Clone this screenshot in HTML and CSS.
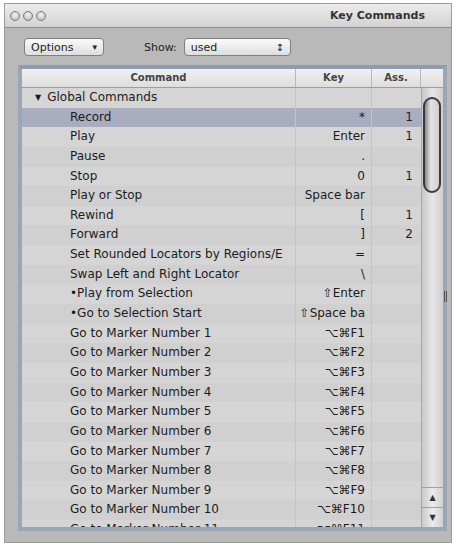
FILE: index.html
```html
<!DOCTYPE html>
<html lang="en">
<head>
  <meta charset="UTF-8" />
  <title>Key Commands</title>
  <link rel="stylesheet" href="styles.css">
</head>
<body>
  <div class="window">
    <div class="titlebar">
      <div class="lights">
        <span class="light"></span><span class="light"></span><span class="light"></span>
      </div>
      <div class="title">Key Commands</div>
    </div>

    <div class="toolbar">
      <div class="popup options">Options <span class="arrow">&#9662;</span></div>
      <span class="show-label">Show:</span>
      <div class="popup show">used <span class="updown">&#8597;</span></div>
    </div>

    <div class="frame">
      <div class="header">
        <div class="hcell col-cmd">Command</div>
        <div class="hcell col-key">Key</div>
        <div class="hcell col-ass">Ass.</div>
        <div class="hcell col-sb"></div>
      </div>
      <div class="content">
        <div class="rows">
          <div class="row group"><div class="cell col-cmd"><span class="tri">&#9660;</span>Global Commands</div><div class="cell col-key"></div><div class="cell col-ass"></div></div>
          <div class="row selected"><div class="cell col-cmd">Record</div><div class="cell col-key">*</div><div class="cell col-ass">1</div></div>
          <div class="row"><div class="cell col-cmd">Play</div><div class="cell col-key">Enter</div><div class="cell col-ass">1</div></div>
          <div class="row"><div class="cell col-cmd">Pause</div><div class="cell col-key">.</div><div class="cell col-ass"></div></div>
          <div class="row"><div class="cell col-cmd">Stop</div><div class="cell col-key">0</div><div class="cell col-ass">1</div></div>
          <div class="row"><div class="cell col-cmd">Play or Stop</div><div class="cell col-key">Space bar</div><div class="cell col-ass"></div></div>
          <div class="row"><div class="cell col-cmd">Rewind</div><div class="cell col-key">[</div><div class="cell col-ass">1</div></div>
          <div class="row"><div class="cell col-cmd">Forward</div><div class="cell col-key">]</div><div class="cell col-ass">2</div></div>
          <div class="row"><div class="cell col-cmd">Set Rounded Locators by Regions/E</div><div class="cell col-key">=</div><div class="cell col-ass"></div></div>
          <div class="row"><div class="cell col-cmd">Swap Left and Right Locator</div><div class="cell col-key">\</div><div class="cell col-ass"></div></div>
          <div class="row"><div class="cell col-cmd">&bull;Play from Selection</div><div class="cell col-key">&#8679;Enter</div><div class="cell col-ass"></div></div>
          <div class="row"><div class="cell col-cmd">&bull;Go to Selection Start</div><div class="cell col-key">&#8679;Space ba</div><div class="cell col-ass"></div></div>
          <div class="row"><div class="cell col-cmd">Go to Marker Number 1</div><div class="cell col-key">&#8997;&#8984;F1</div><div class="cell col-ass"></div></div>
          <div class="row"><div class="cell col-cmd">Go to Marker Number 2</div><div class="cell col-key">&#8997;&#8984;F2</div><div class="cell col-ass"></div></div>
          <div class="row"><div class="cell col-cmd">Go to Marker Number 3</div><div class="cell col-key">&#8997;&#8984;F3</div><div class="cell col-ass"></div></div>
          <div class="row"><div class="cell col-cmd">Go to Marker Number 4</div><div class="cell col-key">&#8997;&#8984;F4</div><div class="cell col-ass"></div></div>
          <div class="row"><div class="cell col-cmd">Go to Marker Number 5</div><div class="cell col-key">&#8997;&#8984;F5</div><div class="cell col-ass"></div></div>
          <div class="row"><div class="cell col-cmd">Go to Marker Number 6</div><div class="cell col-key">&#8997;&#8984;F6</div><div class="cell col-ass"></div></div>
          <div class="row"><div class="cell col-cmd">Go to Marker Number 7</div><div class="cell col-key">&#8997;&#8984;F7</div><div class="cell col-ass"></div></div>
          <div class="row"><div class="cell col-cmd">Go to Marker Number 8</div><div class="cell col-key">&#8997;&#8984;F8</div><div class="cell col-ass"></div></div>
          <div class="row"><div class="cell col-cmd">Go to Marker Number 9</div><div class="cell col-key">&#8997;&#8984;F9</div><div class="cell col-ass"></div></div>
          <div class="row"><div class="cell col-cmd">Go to Marker Number 10</div><div class="cell col-key">&#8997;&#8984;F10</div><div class="cell col-ass"></div></div>
          <div class="row"><div class="cell col-cmd">Go to Marker Number 11</div><div class="cell col-key">&#8997;&#8984;F11</div><div class="cell col-ass"></div></div>
        </div>
        <div class="scrollbar">
          <div class="track"><div class="thumb"></div></div>
          <div class="sb-btn">&#9650;</div>
          <div class="sb-btn">&#9660;</div>
        </div>
      </div>
      <div class="grip"></div>
    </div>
  </div>
</body>
</html>
```

FILE: styles.css
```css
* {
  margin: 0;
  padding: 0;
  box-sizing: border-box;
}
body {
  background: #fff;
  font-family: "DejaVu Sans", Verdana, sans-serif;
  font-size: 12px;
  color: #1c1c1c;
  width: 456px;
  height: 548px;
  overflow: hidden;
}
.window {
  margin: 3px 0 0 4px;
  width: 448px;
  height: 540px;
  background: #b9b9b9;
  border: 1px solid #9c9c9c;
  display: flex;
  flex-direction: column;
}
.titlebar {
  height: 24px;
  flex: none;
  display: flex;
  align-items: center;
  justify-content: space-between;
  padding: 0 26px 0 5px;
  background: linear-gradient(#ececec, #d2d2d2);
  border-bottom: 1px solid #8f8f8f;
}
.lights {
  display: flex;
  gap: 3px;
}
.light {
  width: 10px;
  height: 10px;
  border-radius: 50%;
  border: 1px solid #7a7a7a;
  background: radial-gradient(circle at 50% 35%, #f4f4f4, #b4b4b4);
}
.title {
  font-weight: bold;
  font-size: 11px;
  color: #333;
}
.toolbar {
  display: flex;
  align-items: center;
  height: 36px;
  flex: none;
  padding: 2px 0 0 19px;
}
.popup {
  height: 18px;
  border: 1px solid #7f7f7f;
  border-radius: 4px;
  background: linear-gradient(#fafafa, #dedede);
  font-size: 11px;
  display: flex;
  align-items: center;
  padding: 0 6px;
  color: #222;
}
.options {
  width: 80px;
}
.options .arrow {
  margin-left: auto;
  font-size: 9px;
}
.show-label {
  font-size: 11px;
  margin: 0 7px 0 40px;
  color: #222;
}
.show {
  width: 107px;
}
.show .updown {
  margin-left: auto;
  font-size: 10px;
}
.frame {
  margin: 1px 0 0 13px;
  width: 429px;
  height: 466px;
  border: 4px solid #98a6b6;
  border-top-color: #8d9cae;
  display: flex;
  flex-direction: column;
  position: relative;
  background: #d3d3d3;
}
.header {
  height: 19px;
  flex: none;
  display: flex;
  background: linear-gradient(#f0f0f0, #dedede);
  border-bottom: 1px solid #9e9e9e;
}
.hcell {
  font-size: 10px;
  font-weight: bold;
  color: #444;
  text-align: center;
  line-height: 18px;
  border-right: 1px solid #b8b8b8;
}
.col-cmd { width: 274px; }
.col-key { width: 76px; }
.col-ass { width: 49px; }
.col-sb { flex: 1; border-right: none; }
.content {
  flex: 1;
  display: flex;
  overflow: hidden;
}
.rows {
  width: 399px;
  overflow: hidden;
}
.row {
  height: 19.65px;
  display: flex;
  background: #d5d5d5;
}
.row:nth-child(even) {
  background: #d0d0d0;
}
.row.selected {
  background: #a9adbf;
}
.cell {
  line-height: 19.65px;
  white-space: nowrap;
  overflow: hidden;
  border-right: 1px solid #c4c4c4;
}
.cell.col-cmd {
  padding-left: 48px;
}
.row.group .col-cmd {
  padding-left: 13px;
}
.tri {
  font-size: 8px;
  margin-right: 6px;
  vertical-align: 1px;
}
.cell.col-key {
  text-align: right;
  padding-right: 6px;
}
.cell.col-ass {
  text-align: right;
  padding-right: 8px;
  border-right: none;
}
.scrollbar {
  flex: 1;
  display: flex;
  flex-direction: column;
  background: linear-gradient(90deg, #c8c8c8, #e6e6e6 50%, #cfcfcf);
  border-left: 1px solid #a8a8a8;
}
.track {
  flex: 1;
  padding: 9px 2px 0 1px;
}
.thumb {
  height: 96px;
  border: 2px solid #3a3a3a;
  border-radius: 9px;
  background: linear-gradient(90deg, #8a8a8a, #e2e2e2 40%, #cfcfcf);
}
.sb-btn {
  height: 20px;
  font-size: 8px;
  text-align: center;
  line-height: 20px;
  color: #333;
  border-top: 1px solid #a0a0a0;
  background: linear-gradient(90deg, #cacaca, #ececec 50%, #d0d0d0);
}
.grip {
  position: absolute;
  right: -4px;
  top: 222px;
  width: 3px;
  height: 11px;
  border-left: 1px solid #555;
  border-right: 1px solid #555;
}
```
